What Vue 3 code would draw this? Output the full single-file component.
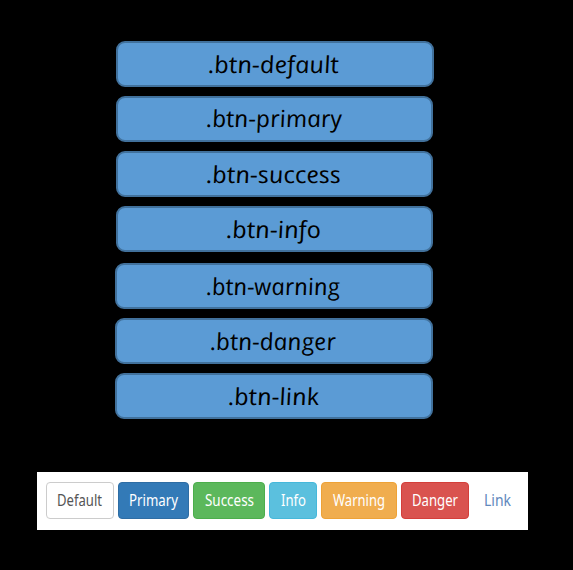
<script setup>
const classes = [
  { label: '.btn-default', left: 116, gap: 0, height: 46, width: 318, x: 93, y: 32, length: 131 },
  { label: '.btn-primary', left: 116, gap: 9, height: 46, width: 317, x: 91, y: 31, length: 136 },
  { label: '.btn-success', left: 116, gap: 9, height: 46, width: 317, x: 91, y: 32, length: 135 },
  { label: '.btn-info', left: 116, gap: 9, height: 46, width: 317, x: 111, y: 32, length: 95 },
  { label: '.btn-warning', left: 115, gap: 11, height: 46, width: 318, x: 92, y: 32, length: 134 },
  { label: '.btn-danger', left: 115, gap: 9, height: 46, width: 318, x: 96, y: 32, length: 126 },
  { label: '.btn-link', left: 115, gap: 9, height: 46, width: 318, x: 114, y: 32, length: 91 }
]
const buttons = [
  { label: 'Default', kind: 'default', width: 68, x: 11, length: 45 },
  { label: 'Primary', kind: 'primary', width: 71, x: 11, length: 49 },
  { label: 'Success', kind: 'success', width: 72, x: 12, length: 49 },
  { label: 'Info', kind: 'info', width: 48, x: 12, length: 25 },
  { label: 'Warning', kind: 'warning', width: 76, x: 12, length: 52 },
  { label: 'Danger', kind: 'danger', width: 68, x: 11, length: 46 },
  { label: 'Link', kind: 'link', width: 49, x: 11, length: 27 }
]
</script>

<template>
  <main class="page">
    <section class="bars">
      <div
        v-for="c in classes"
        :key="c.label"
        class="bar"
        :style="{ width: c.width + 'px', height: c.height + 'px', marginLeft: c.left + 'px', marginTop: c.gap + 'px' }"
      >
        <svg class="caption" :width="c.width" height="46">
          <text class="hand" :transform="`translate(${c.x} ${c.y}) skewX(10)`" :textLength="c.length" lengthAdjust="spacingAndGlyphs">{{ c.label }}</text>
        </svg>
      </div>
    </section>
    <section class="panel">
      <button v-for="b in buttons" :key="b.label" class="btn" :class="b.kind" :style="{ width: b.width + 'px' }">
        <svg class="caption" :width="b.width" height="37">
          <text class="ui" :x="b.x" y="24" :textLength="b.length" lengthAdjust="spacingAndGlyphs">{{ b.label }}</text>
        </svg>
      </button>
    </section>
  </main>
</template>

<style>
body {
  margin: 0;
  background: #000;
}
</style>

<style scoped>
.page {
  box-sizing: border-box;
  width: 573px;
  height: 570px;
  padding-top: 41px;
  background: #000;
  overflow: hidden;
}
.bars {
  display: flex;
  flex-direction: column;
  height: 431px;
}
.bar {
  box-sizing: border-box;
  flex: none;
  border: 2px solid #41719c;
  border-radius: 9px;
  background: #5b9bd5;
}
.caption {
  display: block;
  overflow: visible;
}
.bar .caption {
  margin: -2px;
}
.hand {
  font: italic 23.5px "Open Sans", sans-serif;
  fill: #000;
}
.panel {
  box-sizing: border-box;
  display: flex;
  gap: 4px;
  width: 491px;
  height: 58px;
  margin-left: 37px;
  padding: 10px 9px;
  background: #fff;
}
.btn {
  box-sizing: border-box;
  flex: none;
  height: 37px;
  padding: 0;
  border: 1px solid transparent;
  border-radius: 4px;
  background: transparent;
}
.btn .caption {
  margin: -1px;
}
.ui {
  font: 15.5px "Noto Sans", sans-serif;
  fill: #fff;
}
.default { border-color: #ccc; background: #fff; }
.default .ui { fill: #555; }
.primary { border-color: #2e6da4; background: #337ab7; }
.success { border-color: #4cae4c; background: #5cb85c; }
.info { border-color: #46b8da; background: #5bc0de; }
.warning { border-color: #eea236; background: #f0ad4e; }
.danger { border-color: #d43f3a; background: #d9534f; }
.link .ui { fill: #6289bd; }
</style>
